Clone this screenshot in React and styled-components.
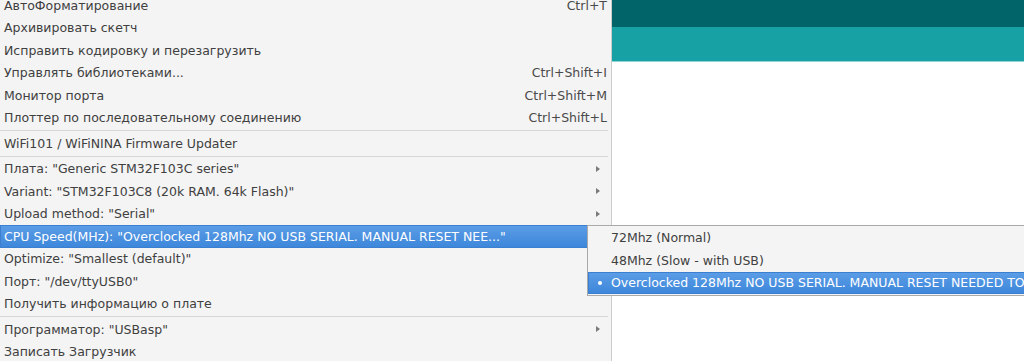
import React from "react";
import styled, { createGlobalStyle, css } from "styled-components";

const GlobalStyle = createGlobalStyle`
  html, body { margin: 0; padding: 0; background: #ffffff; }
  body { font-family: "DejaVu Sans", "Noto Sans", sans-serif; overflow: hidden; }
`;

const Screen = styled.div`
  position: relative;
  display: flex;
  width: 1024px;
  height: 361px;
  overflow: hidden;
`;

const MenuPanel = styled.div`
  flex: none;
  width: 611px;
  background: #f4f4f4;
  border-right: 1px solid #cdcdcd;
  overflow: hidden;
`;

const MenuList = styled.div`
  display: flex;
  flex-direction: column;
  margin-top: -6px;
`;

const highlight = css`
  background: linear-gradient(#5c9de6, #3c86da);
  box-shadow: inset 0 0 0 1px #3a7fd0;
  color: #ffffff;
`;

const Item = styled.div`
  display: flex;
  align-items: center;
  justify-content: space-between;
  height: 22.5px;
  padding: 0 4px;
  font-size: 12.5px;
  color: #404040;
  white-space: nowrap;
  ${(p) => p.$active && highlight}
`;

const Label = styled.span``;

const Shortcut = styled.span`
  color: #4a4a4a;
`;

const Arrow = styled.span`
  width: 0;
  height: 0;
  margin-right: 7px;
  border-top: 3px solid transparent;
  border-bottom: 3px solid transparent;
  border-left: 4px solid ${(p) => (p.$light ? "#ffffff" : "#7a7a7a")};
`;

const Separator = styled.div`
  height: 3px;
  margin-right: 3px;
  display: flex;
  align-items: center;
  &::after {
    content: "";
    flex: 1;
    height: 1px;
    background: #d6d6d6;
  }
`;

const Editor = styled.div`
  flex: 1;
  display: flex;
  flex-direction: column;
`;

const TitleBar = styled.div`
  height: 27px;
  background: #006468;
`;

const Toolbar = styled.div`
  height: 34px;
  background: #17a1a5;
  border-bottom: 1px solid #8fd4d6;
`;

const Code = styled.div`
  flex: 1;
  background: #ffffff;
`;

const Submenu = styled.div`
  position: absolute;
  left: 587px;
  top: 225px;
  width: 600px;
  background: #f4f4f4;
  border: 1px solid #a9a9a9;
  padding: 0.5px 0;
`;

const SubItem = styled.div`
  position: relative;
  display: flex;
  align-items: center;
  height: 22.5px;
  padding-left: 23px;
  font-size: 12.5px;
  color: #404040;
  white-space: nowrap;
  ${(p) => p.$active && highlight}
`;

const Bullet = styled.span`
  position: absolute;
  left: 10px;
  top: 50%;
  width: 4px;
  height: 4px;
  margin-top: -2px;
  border-radius: 50%;
  background: #ffffff;
`;

const menu = [
  { label: "АвтоФорматирование", shortcut: "Ctrl+T" },
  { label: "Архивировать скетч" },
  { label: "Исправить кодировку и перезагрузить" },
  { label: "Управлять библиотеками...", shortcut: "Ctrl+Shift+I" },
  { label: "Монитор порта", shortcut: "Ctrl+Shift+M" },
  { label: "Плоттер по последовательному соединению", shortcut: "Ctrl+Shift+L" },
  { sep: true },
  { label: "WiFi101 / WiFiNINA Firmware Updater" },
  { sep: true },
  { label: 'Плата: "Generic STM32F103C series"', arrow: true },
  { label: 'Variant: "STM32F103C8 (20k RAM. 64k Flash)"', arrow: true },
  { label: 'Upload method: "Serial"', arrow: true },
  { label: 'CPU Speed(MHz): "Overclocked 128Mhz NO USB SERIAL. MANUAL RESET NEE..."', arrow: true, active: true },
  { label: 'Optimize: "Smallest (default)"', arrow: true },
  { label: 'Порт: "/dev/ttyUSB0"', arrow: true },
  { label: "Получить информацию о плате" },
  { sep: true },
  { label: 'Программатор: "USBasp"', arrow: true },
  { label: "Записать Загрузчик" },
];

const sub = [
  { label: "72Mhz (Normal)" },
  { label: "48Mhz (Slow - with USB)" },
  { label: "Overclocked 128Mhz NO USB SERIAL. MANUAL RESET NEEDED TO", active: true },
];

export default function App() {
  return (
    <>
      <GlobalStyle />
      <Screen>
        <MenuPanel>
          <MenuList>
            {menu.map((m, i) =>
              m.sep ? (
                <Separator key={i} />
              ) : (
                <Item key={i} $active={m.active}>
                  <Label>{m.label}</Label>
                  {m.shortcut && <Shortcut>{m.shortcut}</Shortcut>}
                  {m.arrow && <Arrow $light={m.active} />}
                </Item>
              )
            )}
          </MenuList>
        </MenuPanel>
        <Editor>
          <TitleBar />
          <Toolbar />
          <Code />
        </Editor>
        <Submenu>
          {sub.map((s, i) => (
            <SubItem key={i} $active={s.active}>
              {s.active && <Bullet />}
              {s.label}
            </SubItem>
          ))}
        </Submenu>
      </Screen>
    </>
  );
}
